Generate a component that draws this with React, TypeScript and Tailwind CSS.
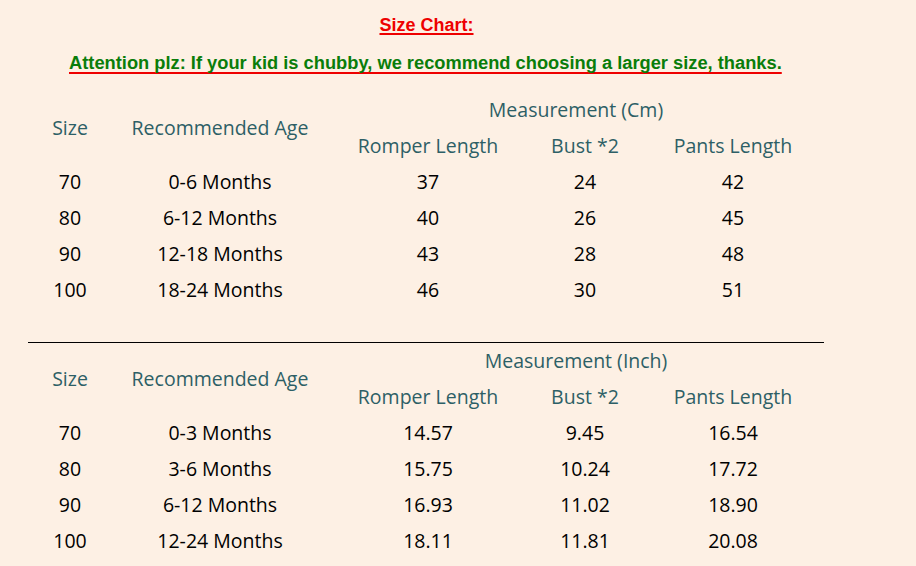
import React from "react";

const cmRows = [
  ["70", "0-6 Months", "37", "24", "42"],
  ["80", "6-12 Months", "40", "26", "45"],
  ["90", "12-18 Months", "43", "28", "48"],
  ["100", "18-24 Months", "46", "30", "51"],
];

const inchRows = [
  ["70", "0-3 Months", "14.57", "9.45", "16.54"],
  ["80", "3-6 Months", "15.75", "10.24", "17.72"],
  ["90", "6-12 Months", "16.93", "11.02", "18.90"],
  ["100", "12-24 Months", "18.11", "11.81", "20.08"],
];

function SizeTable({ unit, rows }: { unit: string; rows: string[][] }) {
  return (
    <div className="grid grid-cols-[84px_216px_200px_114px_182px] auto-rows-[36px] items-center text-center text-[19.5px]">
      <div className="row-span-2 text-[#2d5f66]">Size</div>
      <div className="row-span-2 text-[#2d5f66]">Recommended Age</div>
      <div className="col-span-3 text-[#2d5f66]">Measurement ({unit})</div>
      <div className="text-[#2d5f66]">Romper Length</div>
      <div className="text-[#2d5f66]">Bust *2</div>
      <div className="text-[#2d5f66]">Pants Length</div>
      {rows.map((r) =>
        r.map((cell, i) => (
          <div key={r[0] + i} className="text-black">
            {cell}
          </div>
        ))
      )}
    </div>
  );
}

export default function App() {
  return (
    <div className="w-[916px] h-[566px] bg-[#fdf0e4] overflow-hidden font-['Open_Sans',sans-serif]">
      <div className="pt-[15px] pr-[63px] text-center leading-[20px]">
        <span className="font-['Liberation_Sans',sans-serif] font-bold text-[18px] text-[#ee0000] underline decoration-2 underline-offset-2 [text-decoration-skip-ink:none]">
          Size Chart:
        </span>
      </div>
      <div className="mt-[17px] pl-[69px] leading-[22px]">
        <span className="font-['Liberation_Sans',sans-serif] font-bold text-[18.3px] text-[#0a7d0a] underline decoration-[#ee0000] decoration-2 underline-offset-3 [text-decoration-skip-ink:none]">
          Attention plz: If your kid is chubby, we recommend choosing a larger size, thanks.
        </span>
      </div>
      <div className="pl-[28px] mt-[18px]">
        <SizeTable unit="Cm" rows={cmRows} />
        <div className="mt-[34px] w-[796px] border-t border-black" />
        <SizeTable unit="Inch" rows={inchRows} />
      </div>
    </div>
  );
}
